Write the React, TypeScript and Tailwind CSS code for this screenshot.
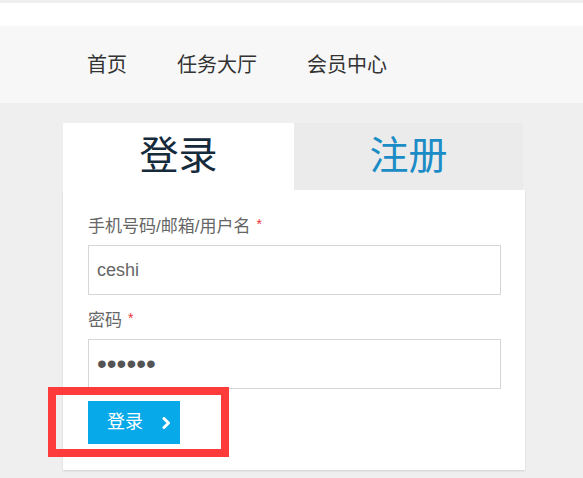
const cn = "font-['Liberation_Sans','Noto_Sans_CJK_SC',sans-serif]"

function Label({ text }: { text: string }) {
  return (
    <div className="flex items-start text-[17px] leading-[24px] text-[#666]">
      <span>{text}</span>
      <span className="ml-[6px] text-[14px] leading-[18px] text-[#e8333a]">*</span>
    </div>
  )
}

export default function App() {
  return (
    <div className={`${cn} min-h-[478px] bg-[#efefef] pt-[3px]`}>
      <div className="h-[23px] bg-white" />
      <nav className="flex h-[77px] items-center gap-[50px] bg-[#f7f7f7] pl-[87px] text-[20px] text-[#333]">
        <a>首页</a>
        <a>任务大厅</a>
        <a>会员中心</a>
      </nav>

      <main className="pl-[63px] pt-[20px]">
        <div className="w-[462px]">
          <div className="flex h-[67px]">
            <div className="flex w-[231px] items-center justify-center bg-white text-[39px] text-[#152a3b]">
              登录
            </div>
            <div className="flex w-[229px] items-center justify-center bg-[#ebebeb] text-[39px] text-[#1b8cc6]">
              注册
            </div>
          </div>

          <div className="bg-white px-[25px] pb-[26px] pt-[25px] shadow-[0_1px_2px_rgba(0,0,0,0.12)]">
            <Label text="手机号码/邮箱/用户名" />
            <input
              readOnly
              value="ceshi"
              className="mt-[6px] block h-[50px] w-[413px] border border-[#d6d6d6] px-[8px] text-[18px] text-[#666] outline-none"
            />

            <div className="mt-[14px]">
              <Label text="密码" />
            </div>
            <input
              readOnly
              type="password"
              value="123456"
              className="mt-[6px] block h-[50px] w-[413px] border border-[#d6d6d6] px-[8px] text-[28px] text-[#555] outline-none"
            />

            <div className="relative mt-[12px] w-[92px]">
              <button className="flex h-[43px] w-[92px] items-center bg-[#08a9e8] pl-[19px] text-[18px] text-white">
                <span>登录</span>
                <svg className="ml-[19px]" width="9" height="12" viewBox="0 0 9 12" fill="none">
                  <path d="M2 1.5 L6.5 6 L2 10.5" stroke="white" strokeWidth="3" strokeLinecap="round" strokeLinejoin="round" />
                </svg>
              </button>
              <div className="absolute -left-[40px] -top-[14px] h-[70px] w-[181px] border-[8px] border-[#fd3b3b]" />
            </div>
          </div>
        </div>
      </main>
    </div>
  )
}
